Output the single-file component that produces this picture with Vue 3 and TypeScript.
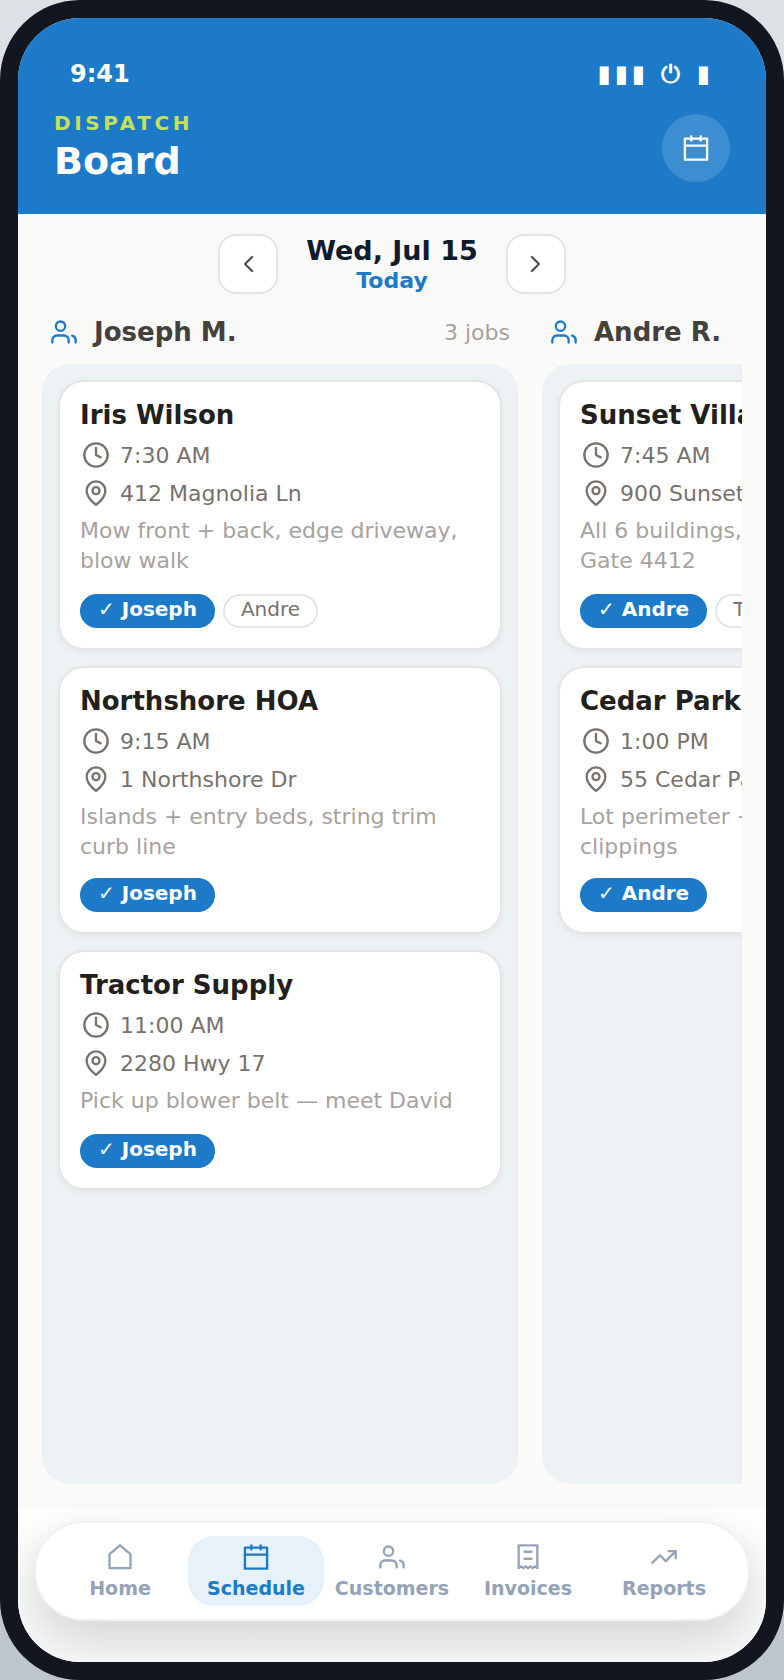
<template>
  <div class="page">
    <div class="phone">
      <div class="screen">
        <header class="top">
          <div class="status">
            <span class="clock-text">9:41</span>
            <span class="status-icons">▮▮▮ ⏻ ▮</span>
          </div>
          <div class="title-row">
            <div>
              <div class="eyebrow">DISPATCH</div>
              <div class="title">Board</div>
            </div>
            <button class="round-btn">
              <svg class="ico" viewBox="0 0 24 24"><path d="M8 2v3.5M16 2v3.5M2.5 10h19" /><rect x="2.5" y="4" width="19" height="18" /></svg>
            </button>
          </div>
        </header>

        <div class="date-nav">
          <button class="arrow">
            <svg class="ico" viewBox="0 0 24 24"><path d="M15.5 18l-6-6 6-6" /></svg>
          </button>
          <div class="date-label">
            <div class="date-main">Wed, Jul 15</div>
            <div class="date-sub">Today</div>
          </div>
          <button class="arrow">
            <svg class="ico" viewBox="0 0 24 24"><path d="M8.5 18l6-6-6-6" /></svg>
          </button>
        </div>

        <div class="board">
          <section v-for="col in columns" :key="col.name" class="column">
            <div class="col-head">
              <svg class="ico col-ico" viewBox="0 0 24 24">
                <circle cx="9" cy="7" r="4" />
                <path d="M16 21v-2a4 4 0 0 0-4-4H6a4 4 0 0 0-4 4v2" />
                <path d="M22 21v-2a4 4 0 0 0-3-3.87" />
              </svg>
              <span class="col-name">{{ col.name }}</span>
              <span class="col-count">{{ col.count }}</span>
            </div>
            <div class="panel">
              <article v-for="job in col.jobs" :key="job.title" class="card">
                <div class="job-title">{{ job.title }}</div>
                <div class="meta first">
                  <svg class="ico meta-ico" viewBox="0 0 24 24"><circle cx="12" cy="12" r="10" /><path d="M12 6v6l4 2" /></svg>
                  <span>{{ job.time }}</span>
                </div>
                <div class="meta">
                  <svg class="ico meta-ico" viewBox="0 0 24 24">
                    <path d="M20 10c0 4.993-5.539 10.193-7.399 11.799a1 1 0 0 1-1.202 0C9.539 20.193 4 14.993 4 10a8 8 0 0 1 16 0" />
                    <circle cx="12" cy="10" r="3" />
                  </svg>
                  <span>{{ job.address }}</span>
                </div>
                <div class="notes">{{ job.notes }}</div>
                <div class="chips" :class="{ roomy: job.roomy }">
                  <span class="chip on">✓ {{ job.crew }}</span>
                  <span v-if="job.other" class="chip">{{ job.other }}</span>
                </div>
              </article>
            </div>
          </section>
        </div>

        <div class="bottom">
          <nav class="tabs">
            <div class="tab">
              <svg class="ico tab-ico" viewBox="0 0 24 24"><path d="M12 2 21 9.5V21.5H3V9.5Z" /></svg>
              <span>Home</span>
            </div>
            <div class="tab active">
              <svg class="ico tab-ico" viewBox="0 0 24 24"><path d="M8 2v3.5M16 2v3.5M2.5 10h19" /><rect x="2.5" y="4" width="19" height="18" /></svg>
              <span>Schedule</span>
            </div>
            <div class="tab">
              <svg class="ico tab-ico" viewBox="0 0 24 24">
                <circle cx="9" cy="7" r="4" />
                <path d="M16 21v-2a4 4 0 0 0-4-4H6a4 4 0 0 0-4 4v2" />
                <path d="M22 21v-2a4 4 0 0 0-3-3.87" />
              </svg>
              <span>Customers</span>
            </div>
            <div class="tab">
              <svg class="ico tab-ico" viewBox="0 0 24 24">
                <path d="M4 2h16v19.5l-2-1.5-2 1.5-2-1.5-2 1.5-2-1.5-2 1.5-2-1.5-2 1.5Z" />
                <path d="M9 7.5h6M9 13.5h6" />
              </svg>
              <span>Invoices</span>
            </div>
            <div class="tab">
              <svg class="ico tab-ico" viewBox="0 0 24 24"><path d="M22 7l-8.5 8.5-5-5L2 17" /><path d="M16 7h6v6" /></svg>
              <span>Reports</span>
            </div>
          </nav>
        </div>
      </div>
    </div>
  </div>
</template>

<script setup lang="ts">
interface Job {
  title: string
  time: string
  address: string
  notes: string
  crew: string
  other?: string
  roomy?: boolean
}

interface Column {
  name: string
  count: string
  jobs: Job[]
}

const columns: Column[] = [
  {
    name: 'Joseph M.',
    count: '3 jobs',
    jobs: [
      { title: 'Iris Wilson', time: '7:30 AM', address: '412 Magnolia Ln', notes: 'Mow front + back, edge driveway, blow walk', crew: 'Joseph', other: 'Andre', roomy: true },
      { title: 'Northshore HOA', time: '9:15 AM', address: '1 Northshore Dr', notes: 'Islands + entry beds, string trim curb line', crew: 'Joseph' },
      { title: 'Tractor Supply', time: '11:00 AM', address: '2280 Hwy 17', notes: 'Pick up blower belt — meet David', crew: 'Joseph', roomy: true }
    ]
  },
  {
    name: 'Andre R.',
    count: '2 jobs',
    jobs: [
      { title: 'Sunset Villas', time: '7:45 AM', address: '900 Sunset Blvd', notes: 'All 6 buildings, mow and edge all. Gate 4412', crew: 'Andre', other: 'Tom', roomy: true },
      { title: 'Cedar Park Plaza', time: '1:00 PM', address: '55 Cedar Park Rd', notes: 'Lot perimeter + hedges, bag up all clippings', crew: 'Andre' }
    ]
  }
]
</script>

<style>
html,
body {
  margin: 0;
  padding: 0;
}
</style>

<style scoped>
.page {
  width: 784px;
  height: 1680px;
  background: linear-gradient(180deg, #dee1e5 0%, #bfc5cf 100%);
  font-family: "DejaVu Sans", sans-serif;
}

.phone {
  box-sizing: border-box;
  width: 784px;
  height: 1680px;
  padding: 18px;
  background: #111620;
  border-radius: 80px;
}

.screen {
  height: 100%;
  display: flex;
  flex-direction: column;
  background: #fafaf8;
  border-radius: 62px;
  overflow: hidden;
}

.ico {
  fill: none;
  stroke: currentColor;
  stroke-width: 2;
  stroke-linecap: round;
  stroke-linejoin: round;
}

.top {
  height: 196px;
  flex: none;
  box-sizing: border-box;
  padding: 40px 36px 0;
  background: #1c7ac9;
  color: #fff;
}

.status {
  display: flex;
  justify-content: space-between;
  align-items: center;
  padding: 0 16px;
  height: 32px;
  font-weight: 700;
}

.clock-text {
  font-size: 24px;
}

.status-icons {
  font-size: 24px;
  letter-spacing: 4px;
  white-space: pre;
}

.title-row {
  display: flex;
  justify-content: space-between;
  align-items: flex-end;
  margin-top: 20px;
}

.eyebrow {
  font-size: 20px;
  font-weight: 700;
  letter-spacing: 3.6px;
  line-height: 26px;
  color: #c6e05a;
}

.title {
  margin-top: 4px;
  font-size: 38px;
  font-weight: 700;
  line-height: 42px;
}

.round-btn {
  width: 68px;
  height: 68px;
  padding: 0;
  border: 0;
  border-radius: 50%;
  background: rgba(255, 255, 255, 0.15);
  color: #fff;
  display: flex;
  align-items: center;
  justify-content: center;
}

.round-btn svg {
  width: 28px;
  height: 28px;
}

.date-nav {
  flex: none;
  display: flex;
  justify-content: center;
  align-items: center;
  gap: 28px;
  margin-top: 20px;
}

.arrow {
  box-sizing: border-box;
  width: 60px;
  height: 60px;
  padding: 0;
  border: 2px solid #e7e5e4;
  border-radius: 18px;
  background: #fff;
  color: #57534e;
  display: flex;
  align-items: center;
  justify-content: center;
}

.arrow svg {
  width: 28px;
  height: 28px;
}

.date-label {
  text-align: center;
  width: 172px;
  white-space: nowrap;
}

.date-main {
  font-size: 27px;
  font-weight: 700;
  line-height: 32px;
  color: #0f1c2e;
}

.date-sub {
  margin-top: 2px;
  font-size: 22px;
  font-weight: 700;
  line-height: 24px;
  color: #1c7ac9;
}

.board {
  flex: 1;
  min-height: 0;
  display: flex;
  gap: 24px;
  margin: 16px 24px 24px;
  overflow: hidden;
}

.column {
  flex: none;
  width: 476px;
  display: flex;
  flex-direction: column;
}

.col-head {
  height: 54px;
  flex: none;
  display: flex;
  align-items: center;
  padding: 0 8px 10px 8px;
  box-sizing: border-box;
}

.col-ico {
  width: 28px;
  height: 28px;
  color: #1c7ac9;
  margin-right: 16px;
}

.col-name {
  flex: 1;
  font-size: 26px;
  font-weight: 700;
  color: #44403c;
}

.col-count {
  font-size: 22px;
  color: #a8a29e;
}

.panel {
  flex: 1;
  display: flex;
  flex-direction: column;
  gap: 16px;
  padding: 16px;
  border-radius: 28px;
  background: #edf2f5;
}

.card {
  box-sizing: border-box;
  padding: 16px 20px 20px;
  border: 2px solid #e7e5e4;
  border-radius: 26px;
  background: #fff;
  box-shadow: 0 2px 6px rgba(0, 0, 0, 0.05);
}

.job-title {
  font-size: 26px;
  font-weight: 700;
  line-height: 34px;
  color: #231f1d;
}

.meta {
  display: flex;
  align-items: center;
  gap: 10px;
  height: 38px;
  padding-left: 2px;
  font-size: 22px;
  color: #78716c;
}

.meta.first {
  margin-top: 4px;
}

.meta-ico {
  width: 28px;
  height: 28px;
}

.notes {
  margin-top: 4px;
  font-size: 22px;
  line-height: 30px;
  color: #a8a29e;
}

.chips {
  display: flex;
  gap: 8px;
  margin-top: 16px;
}

.chips.roomy {
  margin-top: 18px;
}

.chip {
  box-sizing: border-box;
  height: 34px;
  padding: 0 16px;
  border: 2px solid #e7e5e4;
  border-radius: 17px;
  font-size: 20px;
  line-height: 27px;
  color: #78716c;
  white-space: nowrap;
}

.chip.on {
  border-color: #1c7ac9;
  background: #1c7ac9;
  color: #fff;
  font-weight: 700;
}

.bottom {
  flex: none;
  height: 154px;
  box-sizing: border-box;
  padding: 13px 16px 0;
  background: linear-gradient(180deg, #fefefd, #f7f8f7);
}

.tabs {
  box-sizing: border-box;
  height: 100px;
  display: flex;
  padding: 13px 16px;
  background: #fff;
  border: 2px solid #f1f1ef;
  border-radius: 50px;
  box-shadow: 0 18px 44px rgba(15, 23, 42, 0.16);
}

.tab {
  flex: 1;
  height: 70px;
  display: flex;
  flex-direction: column;
  align-items: center;
  border-radius: 26px;
  color: #94a3b8;
  font-size: 19px;
  font-weight: 700;
  line-height: 24px;
  padding-top: 7px;
  box-sizing: border-box;
}

.tab.active {
  background: #e6f1f9;
  color: #1c7ac9;
}

.tab-ico {
  width: 28px;
  height: 28px;
  margin-bottom: 4.5px;
}
</style>
